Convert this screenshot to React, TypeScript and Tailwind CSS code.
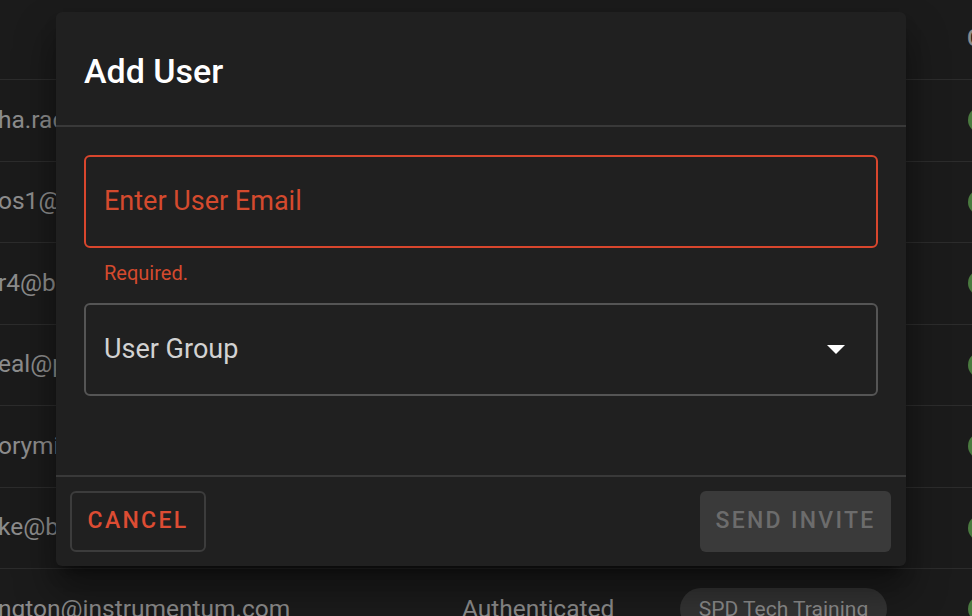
import React from 'react';

// only the tail of each address shows left of the dialog
const rows = [
    { email: 'ha.radcliffe@instrumentum.com', status: 'Authenticated', group: 'SPD Tech Training' },
    { email: 'os1@bayhealth.org', status: 'Authenticated', group: 'SPD Tech Training' },
    { email: 'r4@bayhealth.org', status: 'Authenticated', group: 'SPD Tech Training' },
    { email: 'eal@parkview.com', status: 'Authenticated', group: 'SPD Tech Training' },
    { email: 'orymiller@instrumentum.com', status: 'Authenticated', group: 'SPD Tech Training' },
    { email: 'ke@bayhealth.org', status: 'Authenticated', group: 'SPD Tech Training' },
    { email: 'ngton@instrumentum.com', status: 'Authenticated', group: 'SPD Tech Training' },
];

// the users table sitting behind the dialog
const UserTable = () => (
    <div className="w-full">
        <div className="h-[80px] border-b border-[#2c2c2c] flex items-center">
            <div className="ml-[967px] text-[23px] font-medium text-[#8a8a8a] whitespace-nowrap">Created</div>
        </div>
        {rows.map((r, i) => (
            <div key={i} className="h-[81.5px] border-b border-[#2c2c2c] flex items-center whitespace-nowrap">
                <div className="w-[464px] shrink-0 -ml-[2px]">
                    <span className="text-[24.5px] text-[#8c8c8c]">{r.email}</span>
                </div>
                <div className="w-[218px] shrink-0 text-[24.5px] text-[#8c8c8c]">{r.status}</div>
                <div className="w-[207px] shrink-0">
                    <span className="inline-flex items-center justify-center w-[207px] rounded-full bg-[#333333] py-[8px] text-[21px] text-[#8a8a8a] leading-[26px]">
                        {r.group}
                    </span>
                </div>
                <div className="ml-[81px] w-[26px] h-[26px] rounded-full bg-[#4a7a3f] shrink-0" />
            </div>
        ))}
    </div>
);

const AddUserDialog = () => (
    <div className="absolute left-[56px] top-[12px] w-[850px] h-[554px] bg-[#202020] rounded-[6px] shadow-[0_11px_15px_-7px_rgba(0,0,0,0.5),0_24px_38px_3px_rgba(0,0,0,0.35)] flex flex-col">
        <div className="h-[115px] border-b-2 border-[#393939] px-[28px] pt-[39px] shrink-0">
            <h2 className="text-[34px] leading-[40px] font-medium text-white">Add User</h2>
        </div>
        <div className="flex-1 px-[28px] pt-[28px]">
            <div className="h-[93px] rounded-[6px] border-2 border-[#d9462d] flex items-center px-[18px]">
                <span className="text-[27px] text-[#d44a2e]">Enter User Email</span>
            </div>
            <p className="mt-[13px] ml-[20px] text-[20px] leading-[24px] text-[#d44a2e]">Required.</p>
            <div className="mt-[18px] h-[93px] rounded-[6px] border-2 border-[#555555] flex items-center justify-between pl-[18px] pr-[31px]">
                <span className="text-[27px] text-[#d2d2d2]">User Group</span>
                <svg width="18" height="9" viewBox="0 0 18 9">
                    <path d="M0 0 L18 0 L9 9 Z" fill="#ffffff" />
                </svg>
            </div>
        </div>
        <div className="h-[91px] border-t-2 border-[#393939] flex items-center justify-between pl-[14px] pr-[15px] shrink-0">
            <button className="w-[136px] h-[61px] rounded-[6px] border-2 border-[#3c3c3c] text-[23px] font-medium tracking-[2.3px] text-[#dd4c33]">
                CANCEL
            </button>
            <button className="w-[191px] h-[61px] rounded-[6px] bg-[#3a3a3a] text-[23px] font-medium tracking-[2.3px] text-[#6c6c6c]">
                SEND INVITE
            </button>
        </div>
    </div>
);

export default function App() {
    return (
        <div className="relative w-[972px] h-[616px] overflow-hidden bg-[#1b1b1b] font-['Roboto',sans-serif]">
            <UserTable />
            <AddUserDialog />
        </div>
    );
}
